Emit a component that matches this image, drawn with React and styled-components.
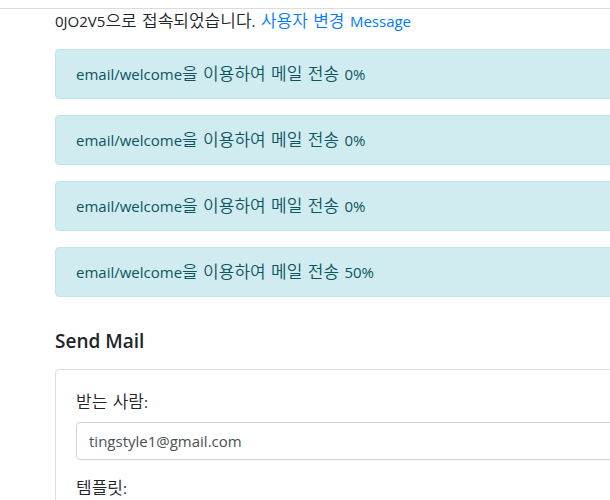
import React from "react";
import styled, { createGlobalStyle } from "styled-components";

const GlobalStyle = createGlobalStyle`
  *, *::before, *::after { box-sizing: border-box; }
  body {
    margin: 0;
    overflow: hidden;
    background: #fff;
    color: #212529;
    font-family: "Open Sans", "Noto Sans CJK KR", sans-serif;
    font-size: 15px;
    font-weight: 400;
    line-height: 24px;
  }
`;

const Header = styled.header`
  height: 9px;
  border-bottom: 1px solid #dbdbdb;
`;

const Container = styled.main`
  min-width: 720px;
  padding: 0 55px;
`;

const Status = styled.p`
  margin: 0 0 16px;
`;

const Link = styled.a`
  color: #007bff;
  text-decoration: none;
  &:hover { text-decoration: underline; }
`;

const Alert = styled.div`
  margin-bottom: 16px;
  padding: 12px 20px;
  border: 1px solid #bee5eb;
  border-radius: 4px;
  background: #d1ecf1;
  color: #0c5460;
`;

const Hangul = styled.span`
  font-family: "DejaVu Sans", "Noto Sans CJK KR", sans-serif;
  font-size: 17px;
  font-weight: 350;
  line-height: 1;
`;

const Title = styled.h5`
  margin: 32px 0 16px;
  font-size: 19px;
  font-weight: 600;
  line-height: 24px;
`;

const Card = styled.form`
  padding: 20px;
  border: 1px solid #dfdfdf;
  border-radius: 4px;
`;

const Field = styled.div`
  margin-bottom: 16px;
`;

const Label = styled.label`
  display: block;
  margin-bottom: 8px;
`;

const Input = styled.input`
  display: block;
  width: 100%;
  height: 38px;
  padding: 6px 12px;
  border: 1px solid #ced4da;
  border-radius: 4px;
  background: #fff;
  color: #495057;
  font: inherit;
`;

const progress = [0, 0, 0, 50];

export default function App() {
  return (
    <>
      <GlobalStyle />
      <Header />
      <Container>
        <Status>
          0JO2V5<Hangul>으로 접속되었습니다</Hangul>.<Hangul> </Hangul>
          <Link href="#user"><Hangul>사용자 변경</Hangul></Link><Hangul> </Hangul>
          <Link href="#message">Message</Link>
        </Status>
        {progress.map((value, index) => (
          <Alert key={index} role="status">
            email/welcome<Hangul>을 이용하여 메일 전송 </Hangul>{`${value}%`}
          </Alert>
        ))}
        <Title>Send Mail</Title>
        <Card>
          <Field>
            <Label htmlFor="recipient"><Hangul>받는 사람</Hangul>:</Label>
            <Input id="recipient" type="email" defaultValue="tingstyle1@gmail.com" />
          </Field>
          <Field>
            <Label htmlFor="template"><Hangul>템플릿</Hangul>:</Label>
            <Input id="template" type="text" />
          </Field>
        </Card>
      </Container>
    </>
  );
}
